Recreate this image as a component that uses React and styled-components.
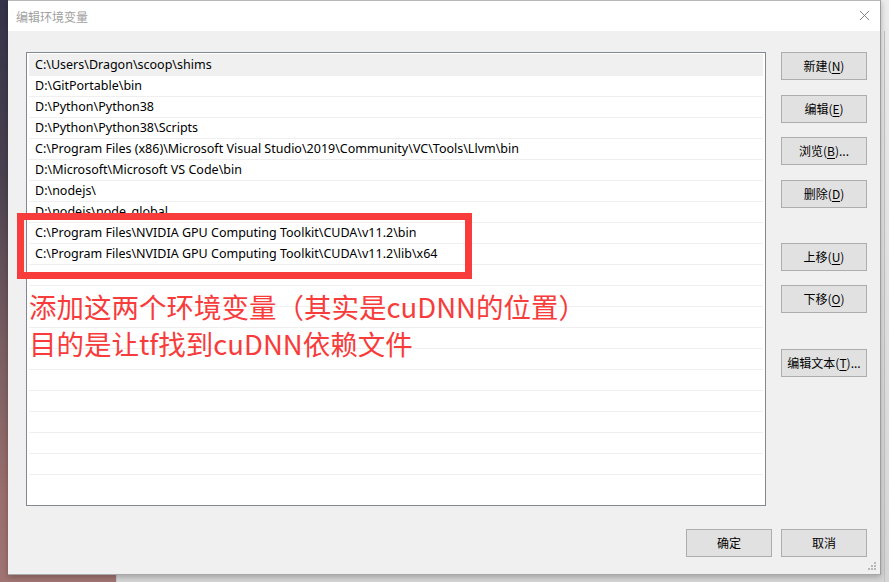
import styled, { createGlobalStyle } from 'styled-components';

const GlobalStyle = createGlobalStyle`
  html, body {
    margin: 0;
    padding: 0;
  }
  body {
    width: 889px;
    height: 582px;
    overflow: hidden;
    font-family: "Noto Sans", "Noto Sans CJK SC", sans-serif;
  }
`;

const paths = [
  'C:\\Users\\Dragon\\scoop\\shims',
  'D:\\GitPortable\\bin',
  'D:\\Python\\Python38',
  'D:\\Python\\Python38\\Scripts',
  'C:\\Program Files (x86)\\Microsoft Visual Studio\\2019\\Community\\VC\\Tools\\Llvm\\bin',
  'D:\\Microsoft\\Microsoft VS Code\\bin',
  'D:\\nodejs\\',
  'D:\\nodejs\\node_global',
  'C:\\Program Files\\NVIDIA GPU Computing Toolkit\\CUDA\\v11.2\\bin',
  'C:\\Program Files\\NVIDIA GPU Computing Toolkit\\CUDA\\v11.2\\lib\\x64',
];

const sideButtons = [
  { label: '新建', key: 'N', top: 0 },
  { label: '编辑', key: 'E', top: 15 },
  { label: '浏览', key: 'B', top: 14, more: true },
  { label: '删除', key: 'D', top: 15 },
  { label: '上移', key: 'U', top: 35 },
  { label: '下移', key: 'O', top: 14 },
  { label: '编辑文本', key: 'T', top: 36, more: true },
];

const App = () => {
  const rows = [...paths, ...Array(11).fill('')];
  return (
    <Desktop>
      <GlobalStyle />
      <BehindWindow />
      <Dialog>
        <TitleBar>
          <Title>编辑环境变量</Title>
          <Close viewBox='0 0 12 12'>
            <path d='M1 1 L11 11 M11 1 L1 11' />
          </Close>
        </TitleBar>
        <Body>
          <Main>
            <ListBox>
              {rows.map((p, i) => (
                <Row key={i} selected={i === 0}>
                  {p}
                </Row>
              ))}
            </ListBox>
            <SideColumn>
              {sideButtons.map((b) => (
                <Button key={b.key} offset={b.top}>
                  {b.label}(<u>{b.key}</u>){b.more ? '...' : ''}
                </Button>
              ))}
            </SideColumn>
          </Main>
          <Footer>
            <Button>确定</Button>
            <Button>取消</Button>
          </Footer>
          <Grip viewBox='0 0 10 10'>
            <rect x='7' y='1' width='2' height='2' />
            <rect x='4' y='4' width='2' height='2' />
            <rect x='7' y='4' width='2' height='2' />
            <rect x='1' y='7' width='2' height='2' />
            <rect x='4' y='7' width='2' height='2' />
            <rect x='7' y='7' width='2' height='2' />
          </Grip>
        </Body>
      </Dialog>
      <RedBox />
      <Note>
        添加这两个环境变量（其实是cuDNN的位置）
        <br />
        目的是让tf找到cuDNN依赖文件
      </Note>
    </Desktop>
  );
};

const Desktop = styled.div`
  position: relative;
  width: 889px;
  height: 582px;
  overflow: hidden;
  background: linear-gradient(180deg, #35334a 0%, #4a4150 30%, #7a5e62 60%, #9a6e6c 85%, #a07472 100%);
`;

const BehindWindow = styled.div`
  position: absolute;
  left: 116px;
  top: 0;
  right: 0;
  bottom: 0;
  background: linear-gradient(180deg, #ececec 0%, #d6d6d6 100%);
  border-left: 1px solid #c8c8c8;
  &::after {
    content: '';
    position: absolute;
    right: 4px;
    top: 31px;
    bottom: 0;
    width: 1px;
    background: #c4c4c4;
  }
`;

const Dialog = styled.div`
  position: absolute;
  left: 8px;
  top: 0;
  width: 872px;
  height: 573px;
  background: #f0f0f0;
  border-right: 1px solid #9c9c9c;
  border-bottom: 1px solid #a8a8a8;
  border-top: 1px solid #b8b8b8;
  box-sizing: content-box;
  display: flex;
  flex-direction: column;
  box-shadow: 0 2px 6px rgba(0, 0, 0, 0.25);
`;

const TitleBar = styled.div`
  height: 30px;
  background: #ffffff;
  display: flex;
  align-items: center;
  justify-content: space-between;
  padding: 0 10px 0 8px;
  flex: none;
`;

const Title = styled.span`
  font-family: "Noto Sans CJK SC", sans-serif;
  font-size: 12px;
  color: #a0a0a0;
`;

const Close = styled.svg`
  width: 11px;
  height: 11px;
  margin-top: -1px;
  stroke: #7a7a7a;
  stroke-width: 1;
  fill: none;
`;

const Body = styled.div`
  position: relative;
  flex: 1;
  display: flex;
  flex-direction: column;
  padding: 21px 13px 16px 18px;
`;

const Main = styled.div`
  display: flex;
  gap: 15px;
`;

const ListBox = styled.div`
  width: 738px;
  height: 451px;
  border: 1px solid #828790;
  background: #ffffff;
  padding: 1px 2px 0 1px;
  overflow: hidden;
  box-sizing: content-box;
`;

const Row = styled.div`
  height: 21px;
  box-sizing: border-box;
  border-top: 1px solid ${(p) => (p.selected ? '#f0f0f0' : '#efefef')};
  background: ${(p) => (p.selected ? '#f0f0f0' : '#ffffff')};
  padding-left: 6px;
  margin-left: 1px;
  font-size: 12.5px;
  line-height: 20px;
  color: #000000;
  white-space: nowrap;
`;

const SideColumn = styled.div`
  display: flex;
  flex-direction: column;
`;

const Button = styled.button`
  width: 86px;
  height: 28px;
  margin-top: ${(p) => (p.offset ? `${p.offset}px` : '0')};
  background: #e1e1e1;
  border: 1px solid #adadad;
  border-radius: 0;
  padding: 0 0 1px;
  font-family: "Noto Sans CJK SC", sans-serif;
  font-size: 12px;
  color: #000000;
  display: flex;
  align-items: center;
  justify-content: center;
  u {
    text-underline-offset: 2px;
  }
`;

const Footer = styled.div`
  display: flex;
  justify-content: flex-end;
  gap: 9px;
  margin-top: 23px;
`;

const Grip = styled.svg`
  position: absolute;
  right: 3px;
  bottom: 3px;
  width: 10px;
  height: 10px;
  fill: #b8b8b8;
`;

const RedBox = styled.div`
  position: absolute;
  left: 17px;
  top: 213px;
  width: 455px;
  height: 66px;
  box-sizing: border-box;
  border: 7px solid #f83b3b;
`;

const Note = styled.div`
  position: absolute;
  left: 29px;
  top: 288px;
  font-family: "Noto Sans CJK SC", sans-serif;
  font-size: 27.5px;
  line-height: 37px;
  color: #f83b3b;
  white-space: nowrap;
`;

export default App;
